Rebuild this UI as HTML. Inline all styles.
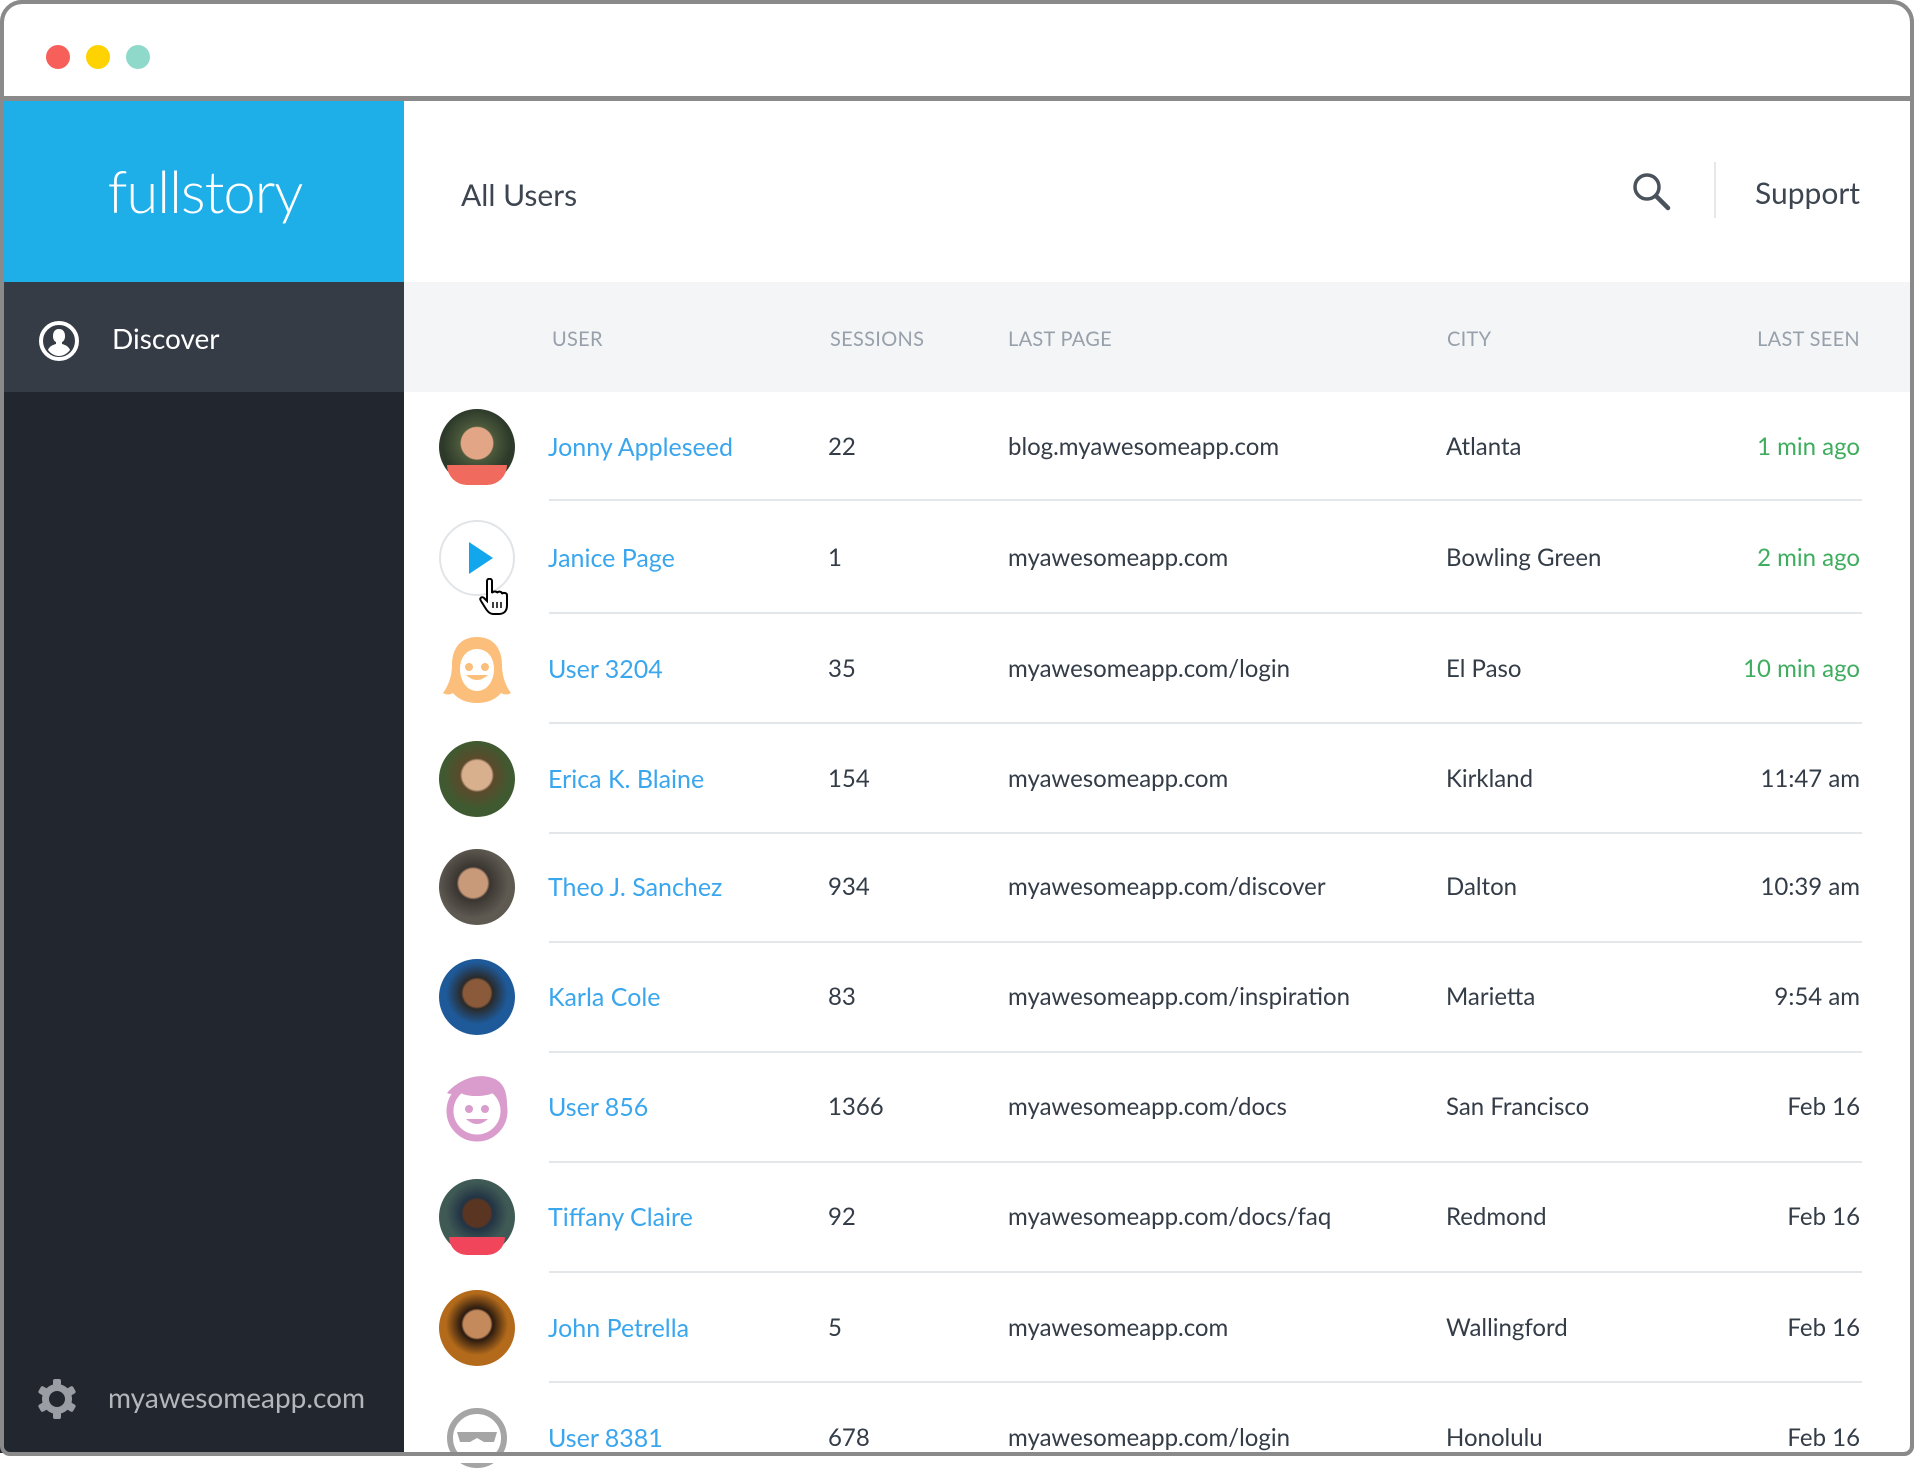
<!DOCTYPE html>
<html><head><meta charset="utf-8"><style>
*{margin:0;padding:0;box-sizing:border-box}
body{width:1914px;height:1456px;background:#fff;position:relative;overflow:hidden;font-family:"Lato","Liberation Sans",sans-serif}
.frame{position:absolute;left:0;top:0;width:1914px;height:1456px;border:4px solid #8a8a8a;border-radius:22px 22px 10px 10px;background:#fff;overflow:hidden}
.bar{position:absolute;left:0;top:96px;width:1914px;height:5px;background:#8a8a8a}
.dot{position:absolute;top:41px;width:24px;height:24px;border-radius:50%}
.side{position:absolute;left:0;top:101px;width:404px;height:1352px;background:#22262e}
.logo{position:absolute;left:0;top:101px;width:404px;height:181px;background:#1eaee8;color:#fff;font-size:58px;font-weight:300;text-align:center;line-height:181px;letter-spacing:-1px;padding-left:6px}
.disc{position:absolute;left:0;top:282px;width:404px;height:110px;background:#363c46;color:#fff;font-size:28px}
.hdr{position:absolute;left:404px;top:282px;width:1520px;height:110px;background:#f4f5f7}
.h{position:absolute;top:327px;font-size:20px;color:#98a1ab;letter-spacing:.3px}
.row{position:absolute;left:0;width:1914px;height:40px;line-height:40px;font-size:24px;color:#333c47}
.row span{position:absolute;white-space:nowrap}
.nm{left:548px;color:#3aa6ee;font-size:25px}
.se{left:828px}.lp{left:1008px}.ci{left:1446px}
.ls{right:54px}
.g{color:#3fad5f}
.sep{position:absolute;left:549px;width:1313px;height:2px;background:#e4e7ea}
.av{position:absolute;left:439px;width:76px;height:76px;border-radius:50%}
</style></head><body>
<div class="frame">
<div class="dot" style="left:42px;background:#f65f5a"></div>
<div class="dot" style="left:82px;background:#fed301"></div>
<div class="dot" style="left:122px;background:#8fd9cb"></div>
</div>
<div class="bar"></div>
<div class="side"></div>
<div class="logo">fullstory</div>
<div class="disc">
<svg style="position:absolute;left:38px;top:38px" width="42" height="42" viewBox="0 0 42 42"><circle cx="21" cy="21" r="18" fill="none" stroke="#fff" stroke-width="4"/><path d="M21 9c4 0 6 3 6 7 0 3-1 5-3 6v2c4 1 7 3 8 6-3 4-7 6-11 6s-8-2-11-6c1-3 4-5 8-6v-2c-2-1-3-3-3-6 0-4 2-7 6-7z" fill="#fff"/></svg>
<span style="position:absolute;left:112px;top:39px">Discover</span></div>
<svg style="position:absolute;left:36px;top:1378px" width="42" height="42" viewBox="0 0 42 42"><g fill="#9a9ea4"><circle cx="21" cy="21" r="15"/><rect x="17" y="1" width="8" height="40" rx="2"/><rect x="17" y="1" width="8" height="40" rx="2" transform="rotate(60 21 21)"/><rect x="17" y="1" width="8" height="40" rx="2" transform="rotate(120 21 21)"/></g><circle cx="21" cy="21" r="8" fill="#22262e"/></svg>
<div style="position:absolute;left:108px;top:1380px;font-size:28px;color:#b3b7bc">myawesomeapp.com</div>

<div style="position:absolute;left:461px;top:177px;font-size:30px;color:#3c4550">All Users</div>
<svg style="position:absolute;left:1632px;top:172px" width="40" height="40" viewBox="0 0 40 40"><circle cx="15" cy="15" r="12" fill="none" stroke="#4a525c" stroke-width="3.5"/><path d="M24 24l12 12" stroke="#4a525c" stroke-width="4.5" stroke-linecap="round"/></svg>
<div style="position:absolute;left:1714px;top:162px;width:2px;height:56px;background:#e6e8eb"></div>
<div style="position:absolute;left:1755px;top:175px;font-size:30px;color:#3c4550">Support</div>

<div class="hdr"></div>
<div class="h" style="left:552px">USER</div>
<div class="h" style="left:830px">SESSIONS</div>
<div class="h" style="left:1008px">LAST PAGE</div>
<div class="h" style="left:1447px">CITY</div>
<div class="h" style="right:54px">LAST SEEN</div>

<div class="av" style="top:409px;background:radial-gradient(circle at 50% 45%,#e2a585 0 28%,#4d5a3c 30%,#2d3a2a 60%);"><div style="position:absolute;bottom:0;left:8px;width:60px;height:20px;background:#f06b5e;border-radius:0 0 30px 30px"></div></div>
<div class="av" style="top:520px;border:2px solid #e2e5e8;background:#fff"><svg style="position:absolute;left:28px;top:20px" width="26" height="32"><path d="M0 0L24 16L0 32Z" fill="#12a6ec"/></svg></div>
<svg style="position:absolute;left:478px;top:578px" width="34" height="38" viewBox="0 0 34 38"><path d="M9 3c0-3 5-3 5 0v12c1-2 5-2 5 0 1-2 5-2 5 1 1-2 5-1 5 1v10c0 6-3 9-8 9h-6c-3 0-5-2-7-5L3 23c-2-3 1-5 3-3l3 3z" fill="#fff" stroke="#000" stroke-width="2"/><path d="M15 24v6M19 24v6M23 24v6" stroke="#000" stroke-width="1.5"/></svg>
<svg class="av" style="top:631px;border-radius:0" width="76" height="76" viewBox="0 0 76 76"><path d="M38 6c-17 0-25 12-25 28 0 10-3 20-9 28 3 2 7 2 10 0 6 7 14 10 24 10s18-3 24-10c3 2 7 2 10 0-6-8-9-18-9-28 0-16-8-28-25-28z" fill="#fbbf7b"/><path d="M38 18c-10 0-17 8-17 20s7 22 17 22 17-10 17-22-7-20-17-20z" fill="#fff"/><circle cx="30" cy="36" r="4" fill="#fbbf7b"/><circle cx="46" cy="36" r="4" fill="#fbbf7b"/><path d="M27 44q11 10 22 0z" fill="#fbbf7b"/></svg>
<div class="av" style="top:741px;background:radial-gradient(circle at 50% 45%,#d8b08e 0 26%,#5b4a2c 30%,#3f5a30 60%)"></div>
<div class="av" style="top:849px;background:radial-gradient(circle at 45% 45%,#c99a7a 0 24%,#3a3530 28%,#5e5a52 60%)"></div>
<div class="av" style="top:959px;background:radial-gradient(circle at 50% 45%,#8a5a3a 0 24%,#2a2a2a 28%,#1e5a9a 55%)"></div>
<svg class="av" style="top:1069px;border-radius:0" width="76" height="76" viewBox="0 0 76 76"><circle cx="38" cy="42" r="27" fill="none" stroke="#d99ccc" stroke-width="7"/><path d="M8 24c10-12 30-22 48-14 8 4 12 12 12 26-6-6-10-10-14-12-8 4-26 4-32 0-6 0-10 2-14 0z" fill="#d99ccc"/><circle cx="30" cy="40" r="4" fill="#d99ccc"/><circle cx="46" cy="40" r="4" fill="#d99ccc"/><path d="M27 50q11 10 22 0z" fill="#d99ccc"/></svg>
<div class="av" style="top:1179px;background:radial-gradient(circle at 50% 45%,#5a3522 0 24%,#234 28%,#3f5a55 55%)"><div style="position:absolute;bottom:0;left:10px;width:56px;height:18px;background:#f0455a;border-radius:0 0 28px 28px"></div></div>
<div class="av" style="top:1290px;background:radial-gradient(circle at 50% 45%,#c48a5c 0 24%,#2a1a10 28%,#b36a1a 55%)"></div>
<svg class="av" style="top:1400px;border-radius:0" width="76" height="76" viewBox="0 0 76 76"><circle cx="38" cy="38" r="27" fill="none" stroke="#a5a5a5" stroke-width="6"/><path d="M18 32h40l-3 10h-10l-7-4-7 4H21z" fill="#a5a5a5"/></svg>

<div class="sep" style="top:499px"></div>
<div class="sep" style="top:612px"></div>
<div class="sep" style="top:722px"></div>
<div class="sep" style="top:832px"></div>
<div class="sep" style="top:941px"></div>
<div class="sep" style="top:1051px"></div>
<div class="sep" style="top:1161px"></div>
<div class="sep" style="top:1271px"></div>
<div class="sep" style="top:1381px"></div>

<div class="row" style="top:427px"><span class="nm">Jonny Appleseed</span><span class="se">22</span><span class="lp">blog.myawesomeapp.com</span><span class="ci">Atlanta</span><span class="ls g">1 min ago</span></div>
<div class="row" style="top:538px"><span class="nm">Janice Page</span><span class="se">1</span><span class="lp">myawesomeapp.com</span><span class="ci">Bowling Green</span><span class="ls g">2 min ago</span></div>
<div class="row" style="top:649px"><span class="nm">User 3204</span><span class="se">35</span><span class="lp">myawesomeapp.com/login</span><span class="ci">El Paso</span><span class="ls g">10 min ago</span></div>
<div class="row" style="top:759px"><span class="nm">Erica K. Blaine</span><span class="se">154</span><span class="lp">myawesomeapp.com</span><span class="ci">Kirkland</span><span class="ls">11:47 am</span></div>
<div class="row" style="top:867px"><span class="nm">Theo J. Sanchez</span><span class="se">934</span><span class="lp">myawesomeapp.com/discover</span><span class="ci">Dalton</span><span class="ls">10:39 am</span></div>
<div class="row" style="top:977px"><span class="nm">Karla Cole</span><span class="se">83</span><span class="lp">myawesomeapp.com/inspiration</span><span class="ci">Marietta</span><span class="ls">9:54 am</span></div>
<div class="row" style="top:1087px"><span class="nm">User 856</span><span class="se">1366</span><span class="lp">myawesomeapp.com/docs</span><span class="ci">San Francisco</span><span class="ls">Feb 16</span></div>
<div class="row" style="top:1197px"><span class="nm">Tiffany Claire</span><span class="se">92</span><span class="lp">myawesomeapp.com/docs/faq</span><span class="ci">Redmond</span><span class="ls">Feb 16</span></div>
<div class="row" style="top:1308px"><span class="nm">John Petrella</span><span class="se">5</span><span class="lp">myawesomeapp.com</span><span class="ci">Wallingford</span><span class="ls">Feb 16</span></div>
<div class="row" style="top:1418px"><span class="nm">User 8381</span><span class="se">678</span><span class="lp">myawesomeapp.com/login</span><span class="ci">Honolulu</span><span class="ls">Feb 16</span></div>

<div style="position:absolute;left:0;top:1453px;width:1914px;height:10px;background:#fff"></div>
<div style="position:absolute;left:0;top:0;width:1914px;height:1456px;border:4px solid #8a8a8a;border-radius:22px 22px 10px 10px;pointer-events:none"></div>
</body></html>
